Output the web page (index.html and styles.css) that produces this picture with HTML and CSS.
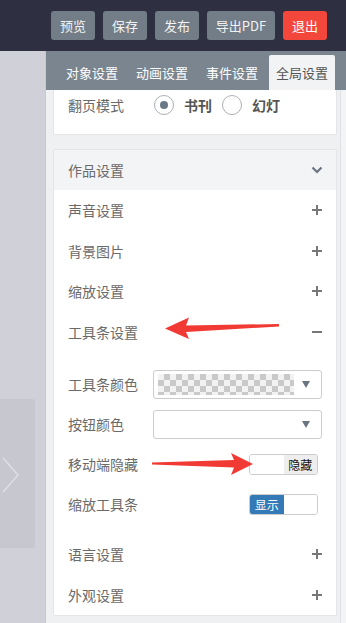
FILE: index.html
```html
<!DOCTYPE html>
<html lang="zh">
<head>
<meta charset="utf-8">
<link rel="stylesheet" href="styles.css">
</head>
<body>
<div class="app">
  <header class="topbar">
    <button class="btn">预览</button>
    <button class="btn">保存</button>
    <button class="btn">发布</button>
    <button class="btn wide">导出PDF</button>
    <button class="btn danger">退出</button>
  </header>
  <div class="main">
    <aside class="stage">
      <div class="stage-box">
        <svg class="next" width="20" height="40" viewBox="0 0 20 40"><polyline points="3,3 18,20 3,37" fill="none" stroke="#dedee4" stroke-width="1.5"/></svg>
      </div>
    </aside>
    <section class="panel">
      <nav class="tabs">
        <div class="tab">对象设置</div>
        <div class="tab">动画设置</div>
        <div class="tab">事件设置</div>
        <div class="tab active">全局设置</div>
      </nav>
      <div class="content">
        <div class="scroll">
          <div class="card card-mode">
            <div class="mode-row">
              <span class="label">翻页模式</span>
              <span class="radio checked"></span><span class="radio-text">书刊</span>
              <span class="radio"></span><span class="radio-text">幻灯</span>
            </div>
          </div>
          <div class="card card-settings">
            <div class="acc-head">
              <span>作品设置</span>
              <svg width="12" height="8" viewBox="0 0 12 8"><polyline points="1.5,1.5 6,6 10.5,1.5" fill="none" stroke="#6b7580" stroke-width="2.2"/></svg>
            </div>
            <div class="row"><span class="label">声音设置</span><span class="plus"></span></div>
            <div class="row"><span class="label">背景图片</span><span class="plus"></span></div>
            <div class="row"><span class="label">缩放设置</span><span class="plus"></span></div>
            <div class="row"><span class="label">工具条设置</span><span class="minus"></span></div>
            <div class="sub">
              <div class="sub-row">
                <span class="label">工具条颜色</span>
                <div class="select"><span class="checker"></span><span class="caret"></span></div>
              </div>
              <div class="sub-row">
                <span class="label">按钮颜色</span>
                <div class="select"><span class="caret"></span></div>
              </div>
              <div class="sub-row">
                <span class="label">移动端隐藏</span>
                <div class="toggle"><span class="half"></span><span class="half off">隐藏</span></div>
              </div>
              <div class="sub-row">
                <span class="label">缩放工具条</span>
                <div class="toggle"><span class="half on">显示</span><span class="half"></span></div>
              </div>
            </div>
            <div class="row"><span class="label">语言设置</span><span class="plus"></span></div>
            <div class="row"><span class="label">外观设置</span><span class="plus"></span></div>
          </div>
        </div>
        <div class="scrollbar"></div>
      </div>
    </section>
  </div>
  <svg class="arrows" width="346" height="623" viewBox="0 0 346 623">
    <polygon points="165,328.5 189,317.5 186,325.5 279,324 279,326.5 186,332 189,339" fill="#f03a33"/>
    <polygon points="253,464 231,453 234,460 152,462.5 152,464.5 234,467.5 231,475" fill="#f03a33"/>
  </svg>
</div>
</body>
</html>
```

FILE: styles.css
```css
* { box-sizing: border-box; }
html, body { margin: 0; padding: 0; }
body {
  width: 346px;
  height: 623px;
  overflow: hidden;
  font-family: "Noto Sans CJK SC", "Noto Sans", sans-serif;
  color: #666;
  background: #eef0f2;
}
.app { position: relative; width: 346px; height: 623px; display: flex; flex-direction: column; }

.topbar {
  height: 51px;
  flex: none;
  background: #2e3041;
  display: flex;
  align-items: center;
  justify-content: flex-end;
  gap: 8px;
  padding: 0 19px 1px 0;
}
.btn {
  width: 44px;
  height: 29px;
  border: none;
  border-radius: 3px;
  background: #737d87;
  color: #f2f2f2;
  font-family: inherit;
  font-size: 13px;
  padding: 0;
  line-height: 29px;
}
.btn.wide { width: 68px; }
.btn.danger { background: #f4473b; color: #fff; }

.main { flex: 1; display: flex; min-height: 0; }
.stage {
  width: 46px;
  flex: none;
  background: #d0d0d8;
  border-right: 1px solid #c8c8d0;
  padding-top: 348px;
}
.stage-box {
  width: 35px;
  height: 149px;
  background: #c7c7d0;
  border-radius: 0 3px 3px 0;
  padding: 56px 0 0 0;
}
.next { display: block; }

.panel { flex: 1; display: flex; flex-direction: column; min-width: 0; background: #eef0f2; }
.tabs {
  height: 39px;
  flex: none;
  background: #7a858f;
  display: flex;
  align-items: flex-end;
  gap: 4px;
  padding-left: 13px;
}
.tab {
  width: 66px;
  height: 35px;
  line-height: 35px;
  text-align: center;
  font-size: 13px;
  color: #fff;
}
.tab.active { background: #f1f3f5; color: #555; border-radius: 2px 2px 0 0; }

.content { flex: 1; display: flex; min-height: 0; }
.scroll { flex: 1; padding: 0 3px 0 7px; min-width: 0; }
.scrollbar { width: 6px; flex: none; background: #f3f4f6; border-left: 1px solid #dfe1e5; }

.card {
  background: #fff;
  border: 1px solid #e3e5e8;
  border-radius: 2px;
}
.card-mode {
  border-top: none;
  border-radius: 0 0 2px 2px;
  height: 45px;
  padding: 0 14px;
}
.mode-row { display: flex; align-items: center; height: 29px; }
.label { font-size: 14px; color: #6a6a6a; white-space: nowrap; }
.mode-row .label { width: 86px; }
.radio {
  width: 20px;
  height: 20px;
  border: 1px solid #aab0b6;
  border-radius: 50%;
  display: flex;
  align-items: center;
  justify-content: center;
  flex: none;
}
.radio.checked::after {
  content: "";
  width: 8px;
  height: 8px;
  border-radius: 50%;
  background: #6a7886;
}
.radio-text { font-size: 14px; color: #555; font-weight: bold; margin: 0 10px 0 10px; }

.card-settings { margin-top: 14px; }
.acc-head {
  height: 40px;
  background: #f3f4f6;
  display: flex;
  align-items: center;
  justify-content: space-between;
  padding: 0 13px 0 14px;
  font-size: 14px;
  color: #6a6a6a;
}
.acc-head svg { display: block; }
.row {
  height: 40.5px;
  display: flex;
  align-items: center;
  justify-content: space-between;
  padding: 0 14px;
}
.plus, .minus { position: relative; width: 10px; height: 10px; flex: none; }
.plus::before, .minus::before {
  content: ""; position: absolute; left: 0; top: 4px; width: 10px; height: 2px; background: #777;
}
.plus::after {
  content: ""; position: absolute; left: 4px; top: 0; width: 2px; height: 10px; background: #777;
}

.sub { padding: 12px 0 10px 0; }
.sub-row {
  height: 40px;
  display: flex;
  align-items: center;
  justify-content: space-between;
  padding: 0 14px 0 14px;
}
.select {
  width: 169px;
  height: 29px;
  border: 1px solid #ccc;
  border-radius: 3px;
  display: flex;
  align-items: center;
  justify-content: flex-end;
  padding: 0 11px 0 4px;
  gap: 8px;
}
.checker {
  flex: 1;
  height: 21px;
  background-color: #f2f2f2;
  background-image: conic-gradient(#c9c9c9 25%, transparent 25% 50%, #c9c9c9 50% 75%, transparent 75%);
  background-size: 12px 12px;
}
.caret {
  width: 0; height: 0;
  border-left: 4.5px solid transparent;
  border-right: 4.5px solid transparent;
  border-top: 7px solid #6b7580;
  flex: none;
}
.toggle {
  width: 69px;
  height: 21px;
  margin-right: 4px;
  border: 1px solid #ccc;
  border-radius: 3px;
  display: flex;
  overflow: hidden;
}
.half {
  flex: 1;
  font-size: 12px;
  line-height: 19px;
  text-align: center;
  background: #fff;
}
.half.off { background: #eeeeee; color: #111; }
.half.on { background: #337ab7; color: #fff; }

.arrows { position: absolute; left: 0; top: 0; pointer-events: none; }
```
